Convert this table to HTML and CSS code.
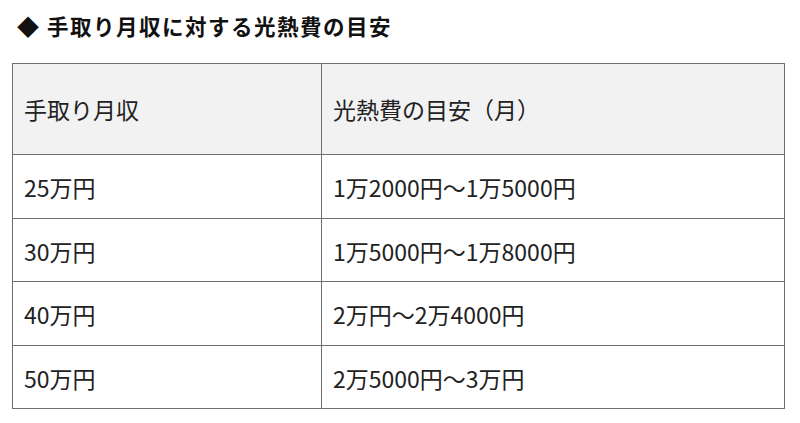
FILE: index.html
```html
<!DOCTYPE html>
<html lang="ja">
<head>
<meta charset="utf-8">
<link rel="stylesheet" href="styles.css">
</head>
<body>
<h2 class="title"><span class="mark">◆</span>手取り月収に対する光熱費の目安</h2>
<table class="tbl">
  <thead>
    <tr><th class="c1">手取り月収</th><th class="c2">光熱費の目安（月）</th></tr>
  </thead>
  <tbody>
    <tr><td>25万円</td><td>1万2000円～1万5000円</td></tr>
    <tr><td>30万円</td><td>1万5000円～1万8000円</td></tr>
    <tr><td>40万円</td><td>2万円～2万4000円</td></tr>
    <tr><td>50万円</td><td>2万5000円～3万円</td></tr>
  </tbody>
</table>
</body>
</html>
```
FILE: styles.css
```css
html, body { margin: 0; padding: 0; background: #fff; }
body {
  padding: 0 15px 0 12px;
  font-family: "Noto Sans CJK JP", "Noto Sans", sans-serif;
  color: #222;
}
.title {
  margin: 0;
  padding: 10px 0 0 5px;
  height: 63px;
  box-sizing: border-box;
  font-size: 21.5px;
  font-weight: 700;
  letter-spacing: 1.5px;
  line-height: 30px;
  color: #111;
}
.mark { display: inline-block; width: 30px; font-size: 22px; letter-spacing: 0; }
.tbl {
  width: 773px;
  border-collapse: collapse;
  table-layout: fixed;
  font-size: 23px;
  font-weight: 400;
}
.tbl th, .tbl td {
  border: 1px solid #6f6f6f;
  text-align: left;
  font-weight: 400;
  padding: 0 0 0 11px;
  line-height: 30px;
  color: #222;
}
.tbl th { background: #f2f2f2; height: 90px; }
.tbl td { height: 63.5px; padding-top: 2px; box-sizing: border-box; }
.c1 { width: 297px; }
```
